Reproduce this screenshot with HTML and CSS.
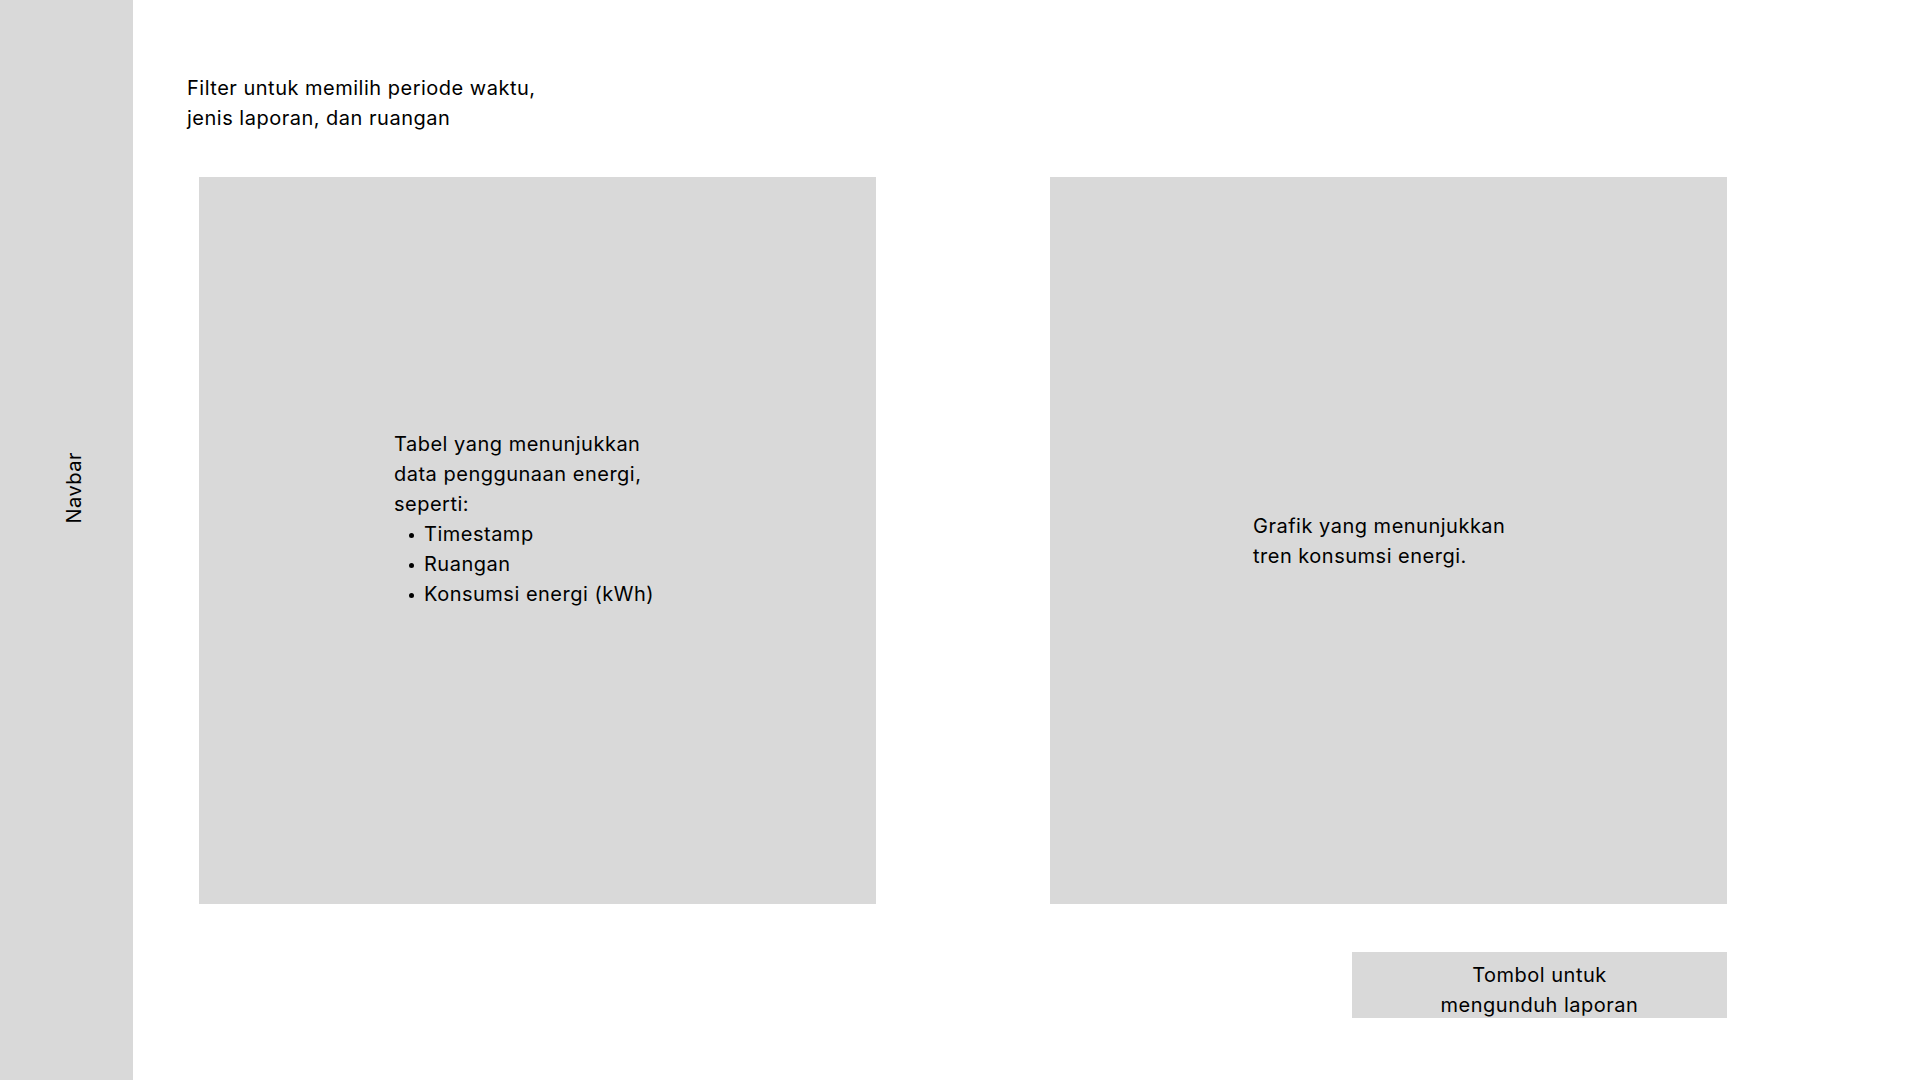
FILE: index.html
```html
<!DOCTYPE html>
<html lang="id">
<head>
<meta charset="utf-8">
<title>Laporan</title>
<link rel="stylesheet" href="styles.css">
</head>
<body>
<div class="page">
  <aside class="sidebar"><span class="nav-label">Navbar</span></aside>
  <main class="main">
    <p class="filter">Filter untuk memilih periode waktu,<br>jenis laporan, dan ruangan</p>
    <div class="panels">
      <section class="panel panel-table">
        <div class="panel-text">
          <p>Tabel yang menunjukkan<br>data penggunaan energi,<br>seperti:</p>
          <ul>
            <li>Timestamp</li>
            <li>Ruangan</li>
            <li>Konsumsi energi (kWh)</li>
          </ul>
        </div>
      </section>
      <section class="panel panel-chart">
        <p class="panel-text">Grafik yang menunjukkan<br>tren konsumsi energi.</p>
      </section>
    </div>
    <div class="actions">
      <div class="download">Tombol untuk<br>mengunduh laporan</div>
    </div>
  </main>
</div>
</body>
</html>
```

FILE: styles.css
```css
* { box-sizing: border-box; }
html, body { margin: 0; padding: 0; background: #ffffff; }
body {
  font-family: "Inter", "Noto Sans", sans-serif;
  color: #000000;
  font-size: 20px;
  letter-spacing: 0.5px;
  line-height: 30px;
}
p { margin: 0; }
.page { display: flex; width: 1920px; height: 1080px; overflow: hidden; }
.sidebar {
  width: 133px;
  flex: none;
  background: #d9d9d9;
  display: flex;
  justify-content: center;
  align-items: flex-start;
  padding-top: 452px;
  padding-left: 15px;
}
.nav-label {
  writing-mode: vertical-rl;
  transform: rotate(180deg);
  font-size: 20px;
  line-height: 20px;
}
.main { flex: 1; padding-left: 54px; padding-top: 73px; }
.filter { height: 60px; }
.panels { display: flex; gap: 174px; margin-top: 44px; margin-left: 12px; }
.panel {
  width: 677px;
  height: 727px;
  background: #d9d9d9;
  display: flex;
  align-items: center;
}
.panel-table { padding-left: 195px; padding-bottom: 43px; }
.panel-chart { padding-left: 203px; }
.panel-text ul { list-style: none; margin: 0; padding: 0 0 0 15px; }
.panel-text li { position: relative; padding-left: 15px; }
.panel-text li::before {
  content: "";
  position: absolute;
  left: 0;
  top: 14px;
  width: 5px;
  height: 5px;
  border-radius: 50%;
  background: #000000;
}
.actions { display: flex; justify-content: flex-end; width: 1540px; margin-top: 48px; }
.download {
  width: 375px;
  height: 66px;
  background: #d9d9d9;
  text-align: center;
  padding-top: 8px;
  overflow: visible;
}
```
